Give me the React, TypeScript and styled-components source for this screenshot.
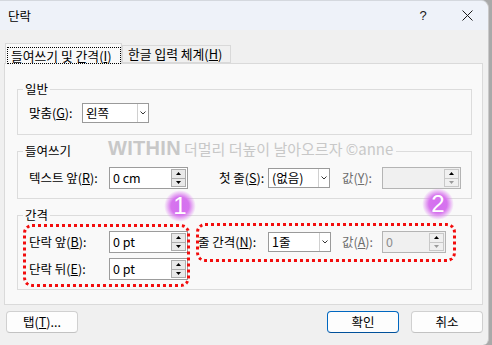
import React from "react";
import styled, { createGlobalStyle } from "styled-components";

const GlobalStyle = createGlobalStyle`
  html, body { margin: 0; padding: 0; background: #a9a9a9; }
  body {
    font-family: "Noto Sans CJK KR", "Noto Sans", sans-serif;
    font-size: 12.5px;
    color: #000;
  }
  * { box-sizing: border-box; }
`;

const Window = styled.div`
  width: 489px;
  height: 345px;
  background: #f0f0f0;
  display: flex;
  flex-direction: column;
  border-top-right-radius: 8px;
  border-bottom-right-radius: 6px;
  border-right: 1px solid #c9c9c9;
  border-top: 1px solid #d4d8de;
  overflow: hidden;
`;

const TitleBar = styled.div`
  height: 29px;
  flex: none;
  background: #eef2f9;
  display: flex;
  align-items: center;
  padding-left: 8px;
`;

const Title = styled.span`
  flex: 1;
  font-size: 12.5px;
  line-height: 16px;
`;

const TitleButton = styled.span<{ $w: number }>`
  width: ${(p) => p.$w}px;
  height: 29px;
  display: flex;
  align-items: center;
  justify-content: center;
  font-family: "Liberation Sans", sans-serif;
  font-size: 13px;
  color: #1a1a1a;
`;

const Body = styled.div`
  flex: 1;
  padding: 13px 5px 0 4px;
  display: flex;
  flex-direction: column;
`;

const TabRow = styled.div`
  display: flex;
  align-items: flex-end;
  height: 20px;
  padding-left: 1px;
  position: relative;
  z-index: 1;
`;

const Tab = styled.div<{ $active?: boolean; $w: number }>`
  width: ${(p) => p.$w}px;
  height: ${(p) => (p.$active ? 21 : 18)}px;
  margin-bottom: ${(p) => (p.$active ? -1 : 0)}px;
  background: ${(p) => (p.$active ? "#f9f9f9" : "#f0f0f0")};
  border: 1px solid #d9d9d9;
  border-bottom: ${(p) => (p.$active ? "none" : "1px solid #d9d9d9")};
  display: flex;
  align-items: ${(p) => (p.$active ? "flex-start" : "center")};
  padding: ${(p) => (p.$active ? "3px 0 0 1px" : "0 0 0 5px")};
  font-size: 12.8px;
  line-height: 16px;
  white-space: nowrap;
`;

const FocusRing = styled.span`
  border: 1px dotted #000;
  padding: 0 4px 0 3px;
  height: 17px;
  width: 114px;
  display: flex;
  align-items: center;
`;

const Key = styled.span`
  text-decoration: underline;
  text-underline-offset: 1px;
`;

const Panel = styled.div`
  width: 479px;
  height: 242px;
  background: #f9f9f9;
  border: 1px solid #dadada;
  padding: 17px 10px 0 12px;
  position: relative;
`;

const Group = styled.fieldset`
  margin: 0 0 8px 0;
  padding: 0;
  border: 1px solid #dcdcdc;
  min-width: 0;
`;

const Legend = styled.legend`
  margin-left: 5px;
  padding: 0 2px;
  font-size: 12.5px;
  line-height: 16px;
`;

const GroupBody = styled.div<{ $pt: number; $pb: number }>`
  padding: ${(p) => p.$pt}px 10px ${(p) => p.$pb}px 11px;
  position: relative;
`;

const Row = styled.div`
  display: flex;
  align-items: center;
  height: 22px;
`;

const SpacingLayout = styled.div`
  display: flex;
  align-items: flex-start;
`;

const Column = styled.div`
  display: flex;
  flex-direction: column;
  gap: 5px;
`;

const Label = styled.span<{ $w: number; $ml?: number; $disabled?: boolean }>`
  width: ${(p) => p.$w}px;
  margin-left: ${(p) => p.$ml ?? 0}px;
  flex: none;
  color: ${(p) => (p.$disabled ? "#6d6d6d" : "#000")};
  font-size: 12.5px;
  line-height: 16px;
  white-space: nowrap;
`;

const Field = styled.div<{ $w: number; $disabled?: boolean }>`
  width: ${(p) => p.$w}px;
  height: 22px;
  flex: none;
  border: 1px solid ${(p) => (p.$disabled ? "#b4b4b4" : "#9c9c9c")};
  background: ${(p) => (p.$disabled ? "#f0f0f0" : "#fff")};
  display: flex;
  align-items: center;
  padding: 0 1px 0 3px;
`;

const FieldText = styled.span<{ $disabled?: boolean }>`
  flex: 1;
  color: ${(p) => (p.$disabled ? "#8d8d8d" : "#000")};
  font-size: 12.5px;
  line-height: 16px;
`;

const SpinCol = styled.div`
  width: 15px;
  height: 18px;
  display: flex;
  flex-direction: column;
`;

const SpinBtn = styled.div<{ $disabled?: boolean }>`
  flex: 1;
  background: ${(p) => (p.$disabled ? "#f0f0f0" : "#e9e9e9")};
  border: 1px solid ${(p) => (p.$disabled ? "#c8c8c8" : "#acacac")};
  display: flex;
  align-items: center;
  justify-content: center;
  & + & { border-top: none; }
`;

const Combo = styled.div<{ $w: number }>`
  width: ${(p) => p.$w}px;
  height: 20px;
  flex: none;
  border: 1px solid #9a9a9a;
  background: #fff;
  display: flex;
`;

const ComboText = styled.span`
  flex: 1;
  padding-left: 3px;
  font-size: 12.5px;
  line-height: 18px;
  white-space: nowrap;
`;

const ComboArrow = styled.div`
  width: 11px;
  border-left: 1px solid #d0d0d0;
  display: flex;
  align-items: center;
  justify-content: center;
`;

const DotBox = styled.div<{ $x: number; $y: number; $w: number; $h: number }>`
  position: absolute;
  left: ${(p) => p.$x}px;
  top: ${(p) => p.$y}px;
  width: ${(p) => p.$w}px;
  height: ${(p) => p.$h}px;
  border: 3px dotted #f20d0d;
  border-radius: 9px;
  pointer-events: none;
`;

const Badge = styled.div<{ $x: number; $y: number }>`
  position: absolute;
  left: ${(p) => p.$x}px;
  top: ${(p) => p.$y}px;
  width: 32px;
  height: 32px;
  border-radius: 50%;
  background: radial-gradient(circle, #d36ff0 0%, #d774ee 40%, rgba(220, 130, 240, 0.55) 55%, rgba(230, 150, 245, 0) 70%);
  color: #fff;
  font-family: "Liberation Sans", sans-serif;
  font-size: 24px;
  line-height: 32px;
  text-align: center;
  pointer-events: none;
`;

const Watermark = styled.div`
  position: absolute;
  left: 68px;
  top: 74px;
  display: flex;
  align-items: baseline;
  gap: 3px;
  background: #f9f9f9;
  padding: 0 3px 0 35px;
  color: #c8c8c8;
  white-space: nowrap;
`;

const WmLogo = styled.span`
  font-family: "Liberation Sans", sans-serif;
  font-weight: 700;
  font-size: 20px;
  line-height: 20px;
  letter-spacing: 0.3px;
`;

const WmText = styled.span`
  font-family: "Noto Sans CJK KR", sans-serif;
  font-size: 15px;
  line-height: 20px;
`;

const Footer = styled.div`
  display: flex;
  align-items: center;
  padding: 6px 0 0 2px;
  gap: 12px;
`;

const Button = styled.div<{ $primary?: boolean }>`
  width: 72px;
  height: 22px;
  border: 1px solid ${(p) => (p.$primary ? "#0067c0" : "#d0d0d0")};
  border-bottom-color: ${(p) => (p.$primary ? "#00509a" : "#c2c2c2")};
  border-radius: 4px;
  background: #fdfdfd;
  display: flex;
  align-items: center;
  justify-content: center;
  font-size: 12.5px;
  line-height: 16px;
`;

const Spacer = styled.div`
  flex: 1;
`;

const Up = ({ c = "#000" }: { c?: string }) => (
  <svg width="5" height="3" viewBox="0 0 5 3">
    <path d="M0 3 L2.5 0 L5 3 Z" fill={c} />
  </svg>
);
const Down = ({ c = "#000" }: { c?: string }) => (
  <svg width="5" height="3" viewBox="0 0 5 3">
    <path d="M0 0 L5 0 L2.5 3 Z" fill={c} />
  </svg>
);
const Chevron = () => (
  <svg width="6" height="4" viewBox="0 0 6 4">
    <path d="M0.5 0.5 L3 3 L5.5 0.5" fill="none" stroke="#333" strokeWidth="1" />
  </svg>
);

const Spin = ({ w, value, disabled }: { w: number; value: string; disabled?: boolean }) => (
  <Field $w={w} $disabled={disabled}>
    <FieldText $disabled={disabled}>{value}</FieldText>
    <SpinCol>
      <SpinBtn $disabled={disabled}>
        <Up />
      </SpinBtn>
      <SpinBtn $disabled={disabled}>
        <Down c={disabled ? "#9a9a9a" : "#000"} />
      </SpinBtn>
    </SpinCol>
  </Field>
);

const Select = ({ w, value }: { w: number; value: string }) => (
  <Combo $w={w}>
    <ComboText>{value}</ComboText>
    <ComboArrow>
      <Chevron />
    </ComboArrow>
  </Combo>
);

export default function App() {
  return (
    <>
      <GlobalStyle />
      <Window>
        <TitleBar>
          <Title>단락</Title>
          <TitleButton $w={46}>?</TitleButton>
          <TitleButton $w={42}>
            <svg width="11" height="11" viewBox="0 0 11 11">
              <path d="M0.5 0.5 L10.5 10.5 M10.5 0.5 L0.5 10.5" stroke="#1a1a1a" strokeWidth="1" />
            </svg>
          </TitleButton>
        </TitleBar>
        <Body>
          <TabRow>
            <Tab $active $w={117}>
              <FocusRing>
                들여쓰기 및 간격(<Key>I</Key>)
              </FocusRing>
            </Tab>
            <Tab $w={109}>
              한글 입력 체계(<Key>H</Key>)
            </Tab>
          </TabRow>
          <Panel>
            <Group>
              <Legend>일반</Legend>
              <GroupBody $pt={5} $pb={10}>
                <Row>
                  <Label $w={53}>
                    맞춤(<Key>G</Key>):
                  </Label>
                  <Select w={67} value="왼쪽" />
                </Row>
              </GroupBody>
            </Group>
            <Group>
              <Legend>들여쓰기</Legend>
              <GroupBody $pt={8} $pb={9}>
                <Row>
                  <Label $w={80}>
                    텍스트 앞(<Key>R</Key>):
                  </Label>
                  <Spin w={79} value="0 cm" />
                  <Label $w={49} $ml={31}>
                    첫 줄(<Key>S</Key>):
                  </Label>
                  <Select w={62} value="(없음)" />
                  <Label $w={40} $ml={12} $disabled>
                    값(<Key>Y</Key>):
                  </Label>
                  <Spin w={79} value="" disabled />
                </Row>
              </GroupBody>
            </Group>
            <Group>
              <Legend>간격</Legend>
              <GroupBody $pt={8} $pb={9}>
                <SpacingLayout>
                  <Column>
                    <Row>
                      <Label $w={80}>
                        단락 앞(<Key>B</Key>):
                      </Label>
                      <Spin w={79} value="0 pt" />
                    </Row>
                    <Row>
                      <Label $w={80}>
                        단락 뒤(<Key>E</Key>):
                      </Label>
                      <Spin w={79} value="0 pt" />
                    </Row>
                  </Column>
                  <Row>
                    <Label $w={70} $ml={10}>
                      줄 간격(<Key>N</Key>):
                    </Label>
                    <Select w={63} value="1줄" />
                    <Label $w={40} $ml={11} $disabled>
                      값(<Key>A</Key>):
                    </Label>
                    <Spin w={64} value="0" disabled />
                  </Row>
                </SpacingLayout>
                <DotBox $x={5} $y={1} $w={167} $h={63} />
                <DotBox $x={178} $y={0} $w={260} $h={39} />
                <Badge $x={146} $y={-33}>1</Badge>
                <Badge $x={404} $y={-35}>2</Badge>
              </GroupBody>
            </Group>
            <Watermark>
              <WmLogo>WITHIN</WmLogo>
              <WmText>더멀리 더높이 날아오르자 ©anne</WmText>
            </Watermark>
          </Panel>
          <Footer>
            <Button>
              탭(<Key>T</Key>)...
            </Button>
            <Spacer />
            <Button $primary>확인</Button>
            <Button>취소</Button>
          </Footer>
        </Body>
      </Window>
    </>
  );
}
